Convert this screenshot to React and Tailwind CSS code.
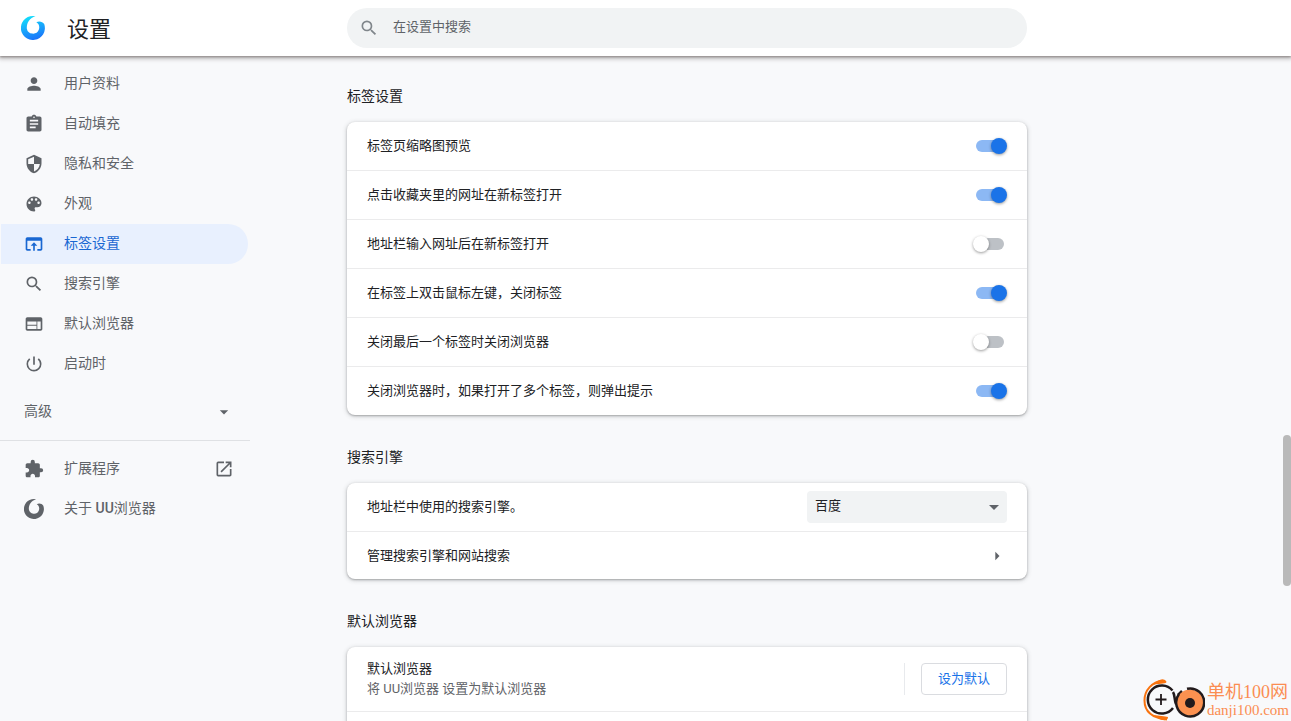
import React from 'react';
import {
  MdPerson,
  MdAssignment,
  MdSecurity,
  MdSearch,
  MdWeb,
  MdPowerSettingsNew,
  MdExtension,
  MdOpenInNew,
  MdArrowDropDown,
  MdArrowRight,
} from 'react-icons/md';

const PaletteIcon = ({ className }) => (
  <svg viewBox="0 0 24 24" className={className} fill="currentColor" aria-hidden="true">
    <path d="M12 3c-4.97 0-9 4.03-9 9s4.03 9 9 9c.83 0 1.5-.67 1.5-1.5 0-.39-.15-.74-.39-1.01-.23-.26-.38-.61-.38-.99 0-.83.67-1.5 1.5-1.5H16c2.76 0 5-2.24 5-5 0-4.42-4.03-8-9-8zm-5.5 9c-.83 0-1.5-.67-1.5-1.5S5.67 9 6.5 9 8 9.67 8 10.5 7.33 12 6.5 12zm3-4C8.67 8 8 7.33 8 6.500S8.67 5 9.500 5s1.5.67 1.5 1.5S10.33 8 9.5 8zm5 0c-.83 0-1.5-.67-1.5-1.5S13.67 5 14.500 5s1.5.67 1.5 1.5S15.33 8 14.5 8zm3 4c-.83 0-1.5-.67-1.5-1.5S16.67 9 17.5 9s1.5.67 1.5 1.5-.67 1.5-1.5 1.500z" />
  </svg>
);

const TabIcon = ({ className }) => (
  <svg viewBox="0 0 24 24" className={className} fill="currentColor" aria-hidden="true">
    <path d="M20 4H4c-1.1 0-2 .9-2 2v12c0 1.1.9 2 2 2h4v-2H4V8h16v10h-4v2h4c1.1 0 2-.9 2-2V6c0-1.1-.9-2-2-2zm-8 6l-4 4h3v6h2v-6h3l-4-4z" />
  </svg>
);

const Swirl = ({ className, fill = 'currentColor' }) => (
  <svg viewBox="0 0 24 24" className={className} aria-hidden="true">
    <defs>
      <linearGradient id="swirl" x1="0.3" y1="0" x2="0.6" y2="1">
        <stop offset="0" stopColor="#12e0fb" />
        <stop offset="0.5" stopColor="#18a8fb" />
        <stop offset="1" stopColor="#1a72fa" />
      </linearGradient>
    </defs>
    <path
      fill={fill}
      d="M14.500 .3A12 12 0 1 0 23.200 8C21.500 5.400 18 4.800 15.300 6.200C18 7.600 18.900 10.800 17.800 13.800A6.300 6.300 0 0 1 5.800 12.400C5.600 7 8.500 2.200 14.500 .3Z"
    />
  </svg>
);

const menuItems = [
  { label: '用户资料', icon: MdPerson },
  { label: '自动填充', icon: MdAssignment },
  { label: '隐私和安全', icon: MdSecurity },
  { label: '外观', icon: PaletteIcon },
  { label: '标签设置', icon: TabIcon, active: true },
  { label: '搜索引擎', icon: MdSearch },
  { label: '默认浏览器', icon: MdWeb },
  { label: '启动时', icon: MdPowerSettingsNew },
];

const tabSettings = [
  { id: 'thumbnail', label: '标签页缩略图预览', on: true },
  { id: 'bookmark', label: '点击收藏夹里的网址在新标签打开', on: true },
  { id: 'address', label: '地址栏输入网址后在新标签打开', on: false },
  { id: 'dblclick', label: '在标签上双击鼠标左键，关闭标签', on: true },
  { id: 'last-tab', label: '关闭最后一个标签时关闭浏览器', on: false },
  { id: 'confirm', label: '关闭浏览器时，如果打开了多个标签，则弹出提示', on: true },
];

const MenuItem = ({ label, icon: Icon, active, external }) => (
  <a
    href="#"
    className={`ml-px mr-0.5 flex h-10 items-center gap-5 rounded-r-full pl-[23px] pr-3.5 text-sm ${
      active ? 'bg-[#e8f0fe] text-[#1967d2]' : 'text-[#5f6368]'
    }`}
  >
    <Icon className="size-5 flex-none" />
    <span className="flex-1 pb-0.5">{label}</span>
    {external && <MdOpenInNew className="size-5" />}
  </a>
);

const Section = ({ title, children }) => (
  <section className="group">
    <h2 className="pb-4 pt-8 text-sm leading-5 group-first:pt-[30px]">{title}</h2>
    <div className="divide-y divide-[#ebebec] rounded-lg bg-white shadow-[0_1px_2px_0_rgba(60,64,67,0.35),0_1px_4px_1px_rgba(60,64,67,0.18)]">
      {children}
    </div>
  </section>
);

const ToggleRow = ({ id, label, on }) => (
  <div className="flex items-center justify-between px-5">
    <label htmlFor={id} className="flex-1 leading-[48px]">
      {label}
    </label>
    <input
      id={id}
      type="checkbox"
      defaultChecked={on}
      className="relative mr-[3px] h-3 w-7 appearance-none rounded-full bg-[#bdc1c6] before:absolute before:-left-[3px] before:-top-0.5 before:size-4 before:rounded-full before:bg-white before:shadow-[0_1px_3px_0_rgba(0,0,0,0.4)] checked:bg-[#8cb8f4] checked:before:left-[15px] checked:before:bg-[#1a73e8]"
    />
  </div>
);

const Watermark = () => (
  <div className="absolute bottom-0 right-0.5 flex items-center gap-0.5 text-[#fb8d52]">
    <svg viewBox="0 0 62 42" className="h-[42px] w-[62px]" aria-hidden="true">
      <path d="M20 1.5C9 3 1.5 11 1.5 21.5S9 39 24 40.5" fill="none" stroke="#f9730f" strokeWidth="2" />
      <path d="M10 6C15 1 20-1 23 2C25 5 20 4 10 6ZM10 36C16 37 22 37 25 38C25 43 17 42 10 36Z" fill="#f9730f" />
      <path d="M29.500 11.500A14 14 0 1 0 30 29" fill="none" stroke="#211a1c" strokeWidth="2.5" />
      <path d="M18 15V26M12.500 20.500H23.500" stroke="#211a1c" strokeWidth="1.8" />
      <path d="M30 13C32 16 31 20 33 25M39 12L35 16" fill="none" stroke="#211a1c" strokeWidth="2.5" />
      <circle cx="47" cy="24" r="13.5" fill="#fb9150" />
      <path d="M44 9.800A14 14 0 1 1 36 15" fill="none" stroke="#211a1c" strokeWidth="2.5" />
      <circle cx="47" cy="24" r="5" fill="#211a1c" />
    </svg>
    <div className="font-['Liberation_Serif','Noto_Sans_CJK_SC',serif]">
      <p className="text-lg leading-5">单机100网</p>
      <p className="text-[15px] leading-4">danji100.com</p>
    </div>
  </div>
);

export default function App() {
  return (
    <div className="relative flex h-screen flex-col overflow-hidden bg-[#f8f9fb] font-[Roboto,'Noto_Sans_CJK_SC',sans-serif] text-[13px] text-[#202124]">
      <header className="z-10 grid h-14 flex-none grid-cols-[347fr_680px_264fr] items-center bg-white shadow-[0_1px_2px_0_rgba(60,50,45,0.4),0_2px_4px_1px_rgba(60,50,45,0.3)]">
        <div className="flex items-center gap-[22px] pl-[21px]">
          <Swirl className="size-6" fill="url(#swirl)" />
          <h1 className="pt-1 text-[22px] leading-8">设置</h1>
        </div>
        <label className="flex h-10 items-center gap-3.5 rounded-full bg-[#f1f3f4] px-3">
          <MdSearch className="size-5 text-[#80868b]" />
          <input
            type="search"
            aria-label="在设置中搜索"
            placeholder="在设置中搜索"
            className="flex-1 bg-transparent pb-0.5 outline-none placeholder:text-[#5f6368]"
          />
        </label>
      </header>

      <div className="grid min-h-0 flex-1 grid-cols-[347fr_680px_264fr]">
        <nav className="w-[250px] pt-2">
          {menuItems.map((item) => (
            <MenuItem key={item.label} {...item} />
          ))}
          <button className="my-1 flex h-12 w-full items-center justify-between pl-6 pr-4 text-sm text-[#5f6368]">
            <span className="pb-0.5">高级</span>
            <MdArrowDropDown className="size-5" />
          </button>
          <div className="border-t border-[#dfe1e4] pt-2">
            <MenuItem label="扩展程序" icon={MdExtension} external />
            <MenuItem
              label={
                <>
                  关于 <span className="font-medium">UU</span>浏览器
                </>
              }
              icon={Swirl}
            />
          </div>
        </nav>

        <main>
          <Section title="标签设置">
            {tabSettings.map((row) => (
              <ToggleRow key={row.id} {...row} />
            ))}
          </Section>

          <Section title="搜索引擎">
            <div className="flex h-[49px] items-center justify-between px-5">
              <label htmlFor="engine">地址栏中使用的搜索引擎。</label>
              <div className="relative w-[200px]">
                <select id="engine" className="h-8 w-full appearance-none rounded bg-[#f1f3f4] px-2 pb-0.5">
                  <option>百度</option>
                </select>
                <MdArrowDropDown className="pointer-events-none absolute right-px top-1 size-6 text-[#5f6368]" />
              </div>
            </div>
            <button className="flex h-[47px] w-full items-center justify-between px-5">
              <span>管理搜索引擎和网站搜索</span>
              <MdArrowRight className="size-5 text-[#5f6368]" />
            </button>
          </Section>

          <Section title="默认浏览器">
            <div className="flex h-[65px] items-center px-5">
              <div className="flex-1 leading-5">
                <p>默认浏览器</p>
                <p className="text-[#5f6368]">将 UU浏览器 设置为默认浏览器</p>
              </div>
              <div className="border-l border-[#e8eaed] pl-4">
                <button className="h-8 rounded border border-[#dadce0] px-4 text-[#1a73e8]">设为默认</button>
              </div>
            </div>
            <div className="h-12" />
          </Section>
        </main>
      </div>

      <div className="absolute right-0 top-[435px] h-[151px] w-2 rounded-full bg-[#b9b9b9]" />
      <Watermark />
    </div>
  );
}
